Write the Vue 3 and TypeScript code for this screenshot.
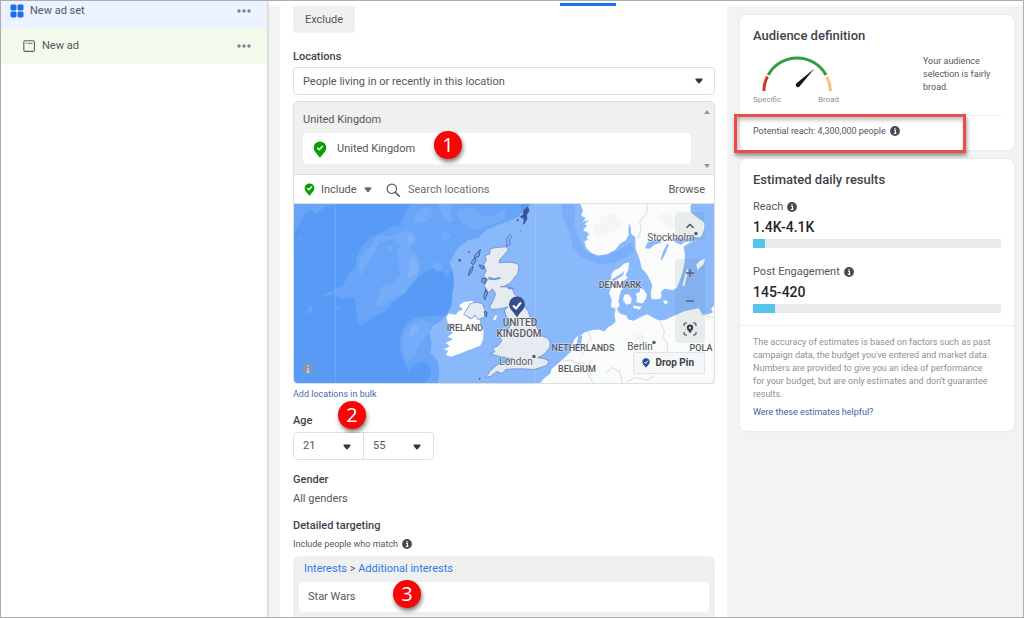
<script setup lang="ts">
import { ref } from 'vue'

interface AdRow { label: string; kind: 'set' | 'ad' }
interface Estimate { label: string; value: string; share: number }
interface Place { name: string; x: number; y: number; kind?: 'city' | 'major' }

const rows: AdRow[] = [
  { label: 'New ad set', kind: 'set' },
  { label: 'New ad', kind: 'ad' },
]

const estimates: Estimate[] = [
  { label: 'Reach', value: '1.4K-4.1K', share: 5 },
  { label: 'Post Engagement', value: '145-420', share: 9 },
]

const places: Place[] = [
  { name: 'IRELAND', x: 171, y: 127 },
  { name: 'UNITED', x: 226, y: 122, kind: 'major' },
  { name: 'KINGDOM', x: 225, y: 133, kind: 'major' },
  { name: 'DENMARK', x: 326, y: 84 },
  { name: 'NETHERLANDS', x: 289, y: 147 },
  { name: 'BELGIUM', x: 283, y: 168 },
  { name: 'POLA', x: 407, y: 147 },
  { name: 'London', x: 222, y: 161, kind: 'city' },
  { name: 'Berlin', x: 346, y: 146, kind: 'city' },
  { name: 'Stockholm', x: 377, y: 37, kind: 'city' },
]

const locationType = ref('People living in or recently in this location')
const mode = ref('Include')
const query = ref('')
const ageMin = ref('21')
const ageMax = ref('55')
</script>

<template>
  <div class="shell">
    <nav class="sidebar" aria-label="Campaign structure">
      <div v-for="row in rows" :key="row.label" class="row" :class="row.kind">
        <svg v-if="row.kind === 'set'" class="row-icon" viewBox="0 0 14 14" aria-hidden="true">
          <g fill="#1b6fee">
            <rect x="0.5" y="0.5" width="6" height="6" rx="1.4" />
            <rect x="7.5" y="0.5" width="6" height="6" rx="1.4" />
            <rect x="0.5" y="7.5" width="6" height="6" rx="1.4" />
            <rect x="7.5" y="7.5" width="6" height="6" rx="1.4" />
          </g>
        </svg>
        <svg v-else class="row-icon" viewBox="0 0 14 14" aria-hidden="true">
          <rect x="1.8" y="1.8" width="10.6" height="10.6" rx="1.4" fill="none" stroke="#5c605c" stroke-width="1.1" />
          <path d="M3.6 4.3h1.2M5.8 4.3h4.8" stroke="#5c605c" stroke-width="0.9" />
        </svg>
        <span class="row-label">{{ row.label }}</span>
        <button class="more" type="button" :aria-label="`More options for ${row.label}`">
          <svg viewBox="0 0 14 4" aria-hidden="true">
            <g fill="#7c8494"><circle cx="2" cy="2" r="1.7" /><circle cx="7" cy="2" r="1.7" /><circle cx="12" cy="2" r="1.7" /></g>
          </svg>
        </button>
      </div>
    </nav>

    <div class="work">
      <div class="tabstrip"><span class="tab-mark"></span></div>
      <div class="columns">
        <main class="form">
          <button class="exclude" type="button">Exclude</button>

          <label class="heading locations-label" for="location-type">Locations</label>
          <div class="picker">
            <select id="location-type" v-model="locationType">
              <option>People living in or recently in this location</option>
            </select>
            <svg class="caret" viewBox="0 0 8 6" aria-hidden="true"><path d="M.6.6h6.8q.4 1.2-.4 2L4.6 5.3q-.6.5-1.2 0L1 2.6Q.2 1.8.6.6z" fill="#33383f" /></svg>
          </div>

          <section class="places">
            <div class="chosen">
              <div class="chosen-list">
                <div class="country">United Kingdom</div>
                <div class="chosen-item">
                  <svg class="pin" viewBox="0 0 14 17" aria-hidden="true">
                    <path d="M7 .5a6.3 6.3 0 0 1 6.4 6.3c0 3.8-4.4 6.7-5.6 9.2q-.8.9-1.6 0C5 13.5.6 10.6.6 6.8A6.3 6.3 0 0 1 7 .5z" fill="#0a9d0a" />
                    <path d="M4.3 6.9l1.9 1.8 3.5-3.6" fill="none" stroke="#fff" stroke-width="1.5" />
                  </svg>
                  <span>United Kingdom</span>
                  <span class="badge badge-one">1</span>
                </div>
              </div>
              <div class="scroller" aria-hidden="true">
                <svg viewBox="0 0 6 4"><path d="M0 4L3 0l3 4z" fill="#969696" /></svg>
                <svg viewBox="0 0 6 4"><path d="M0 0h6L3 4z" fill="#969696" /></svg>
              </div>
            </div>

            <div class="search">
              <svg class="pin small" viewBox="0 0 14 17" aria-hidden="true">
                <path d="M7 .5a6.3 6.3 0 0 1 6.4 6.3c0 3.8-4.4 6.7-5.6 9.2q-.8.9-1.6 0C5 13.5.6 10.6.6 6.8A6.3 6.3 0 0 1 7 .5z" fill="#0a9d0a" />
                <path d="M4 6.7l2.2 2.2 4-4.2" fill="none" stroke="#fff" stroke-width="1.8" />
              </svg>
              <div class="mode">
                <select v-model="mode" aria-label="Include or exclude">
                  <option>Include</option>
                  <option>Exclude</option>
                </select>
                <svg class="mode-caret" viewBox="0 0 8 6" aria-hidden="true"><path d="M.8.9h6.4L4 5z" fill="#5a606b" stroke="#5a606b" stroke-linejoin="round" /></svg>
              </div>
              <svg class="lens" viewBox="0 0 14 14" aria-hidden="true">
                <circle cx="5.8" cy="5.8" r="4.7" fill="none" stroke="#53585f" stroke-width="1.2" />
                <path d="M9.3 9.3l3.8 3.8" stroke="#53585f" stroke-width="1.6" stroke-linecap="round" />
              </svg>
              <input v-model="query" type="text" placeholder="Search locations" aria-label="Search locations" />
              <button class="browse" type="button">Browse</button>
            </div>

            <div class="map">
              <svg class="chart" viewBox="0 0 420 180" preserveAspectRatio="xMidYMid slice" role="img" aria-label="Map of the United Kingdom and northern Europe">
                <rect width="420" height="180" fill="#589bf7" />
                <g transform="scale(0.333333)">
                  <g transform="translate(-9 -12)">
                    <g fill="#68a5f9">
                      <path d="M0 0H138L128 18 100 22 78 42 60 32 44 38 32 60 20 84 8 100z" />
                      <path d="M360 12H690V100L500 172 482 212 468 236 452 256 470 232 456 218 430 206 402 218 376 236 356 262 330 292 306 308 286 336 250 350 226 368 204 378 196 340 192 296 150 296 126 286 88 292 130 270 156 258 176 218 192 202 198 168 214 140 240 112 276 98 300 82 328 78 336 50z" />
                      <path d="M500 170L488 230 484 300 470 344 428 350 380 352 352 366 332 394 326 436 336 484 352 516 370 496 396 486 416 500 420 526 400 552H470L560 400z" />
                      <path d="M48 344L56 320 66 316 60 338z" /><circle cx="26" cy="120" r="4" /><circle cx="140" cy="326" r="4" /><circle cx="186" cy="168" r="4" />
                    </g>
                    <g fill="#74acfa">
                      <path d="M208 178L222 154 244 138 254 112 300 108 348 92 370 100 376 122 356 142 368 158 384 174 388 204 378 236 356 258 342 282 310 294 280 318 252 320 264 288 270 262 306 252 328 224 322 186 318 158 330 136 302 118 264 130 246 168 228 194 208 230 200 216z" />
                      <path d="M384 34L402 22 426 34 420 52 402 66 374 72 366 58zM440 12H486L474 38 488 60 478 72 462 62 450 40zM500 30L546 24 570 50 602 50 642 30V60L550 92 518 72 500 52z" />
                      <path d="M452 102q8-12 20-2t4 18q-10 6-24-2zM430 196q8-12 18-4t4 20q-12 8-22-4z" />
                      <path d="M344 384L364 368 394 362 422 374 412 404 386 436 370 468 348 490 334 450 336 410z" />
                      <circle cx="296" cy="146" r="8" /><circle cx="240" cy="330" r="5" /><path d="M390 12L402 12 396 20z" />
                    </g>
                    <path d="M358 178l8-10 8 16 10 14-4 22-14 10-18 10 6-24zM358 388l18-12 6 14-18 22-8-4zM346 110l16-4 8 16-14 14z" fill="#80b3fa" />
                    <path d="M680 52L650 66 616 78 584 92 562 116 530 122 500 146 486 172 476 190 486 218 490 254 484 284 482 320 466 348 446 366 426 378 414 400 422 430 418 460 440 486 446 518 440 552H1290V12H720z" fill="#89b8fb" />
                  </g>

                  <g transform="translate(621 -12)">
                    <path d="M182 12L186 58 206 98 214 142 242 174 294 194 344 188 382 170 400 154 390 130 340 160 290 172 252 154 236 118 220 80 222 12z" fill="#7aaefa" />
                    <g fill="#fafbfb">
                      <path d="M238 12L246 34 240 48 254 56 242 70 258 78 246 92 262 100 252 112 262 120 250 126 256 146 270 160 290 168 318 164 344 150 358 132 374 122 384 104 386 86 392 106 402 112 404 150 416 180 422 206 436 222 448 244 454 258 450 276 450 296 460 300 478 298 482 290 480 276 492 268 516 272 528 264 536 244 544 220 550 194 552 168 548 142 566 130 584 122 602 108 610 88 610 70 586 52 570 40 568 22 572 12z" />
                      <path d="M332 222L340 212 354 206 370 192 384 188 382 212 374 226 380 236 368 244 366 264 358 280 352 306 356 318 348 328 356 342 376 348 382 360 398 364 420 352 438 344 456 354 472 362 490 362 516 350 548 336 574 330 594 326 604 346 622 344 636 338 630 328 642 316H660V560H110L128 538 148 522 152 508 178 486 204 462 222 444 230 418 248 400 270 392 294 390 310 396 320 384 334 376 344 366 340 346 344 330 330 322 332 300 324 280 330 268 322 250 330 238z" />
                      <path d="M370 286l12-2 10 12-2 16-14 4-10-14zM404 282l12-4 2-12 12 6 8 14-4 14-10 12-18-4 2-14zM396 318l26 4-6 8-18-4zM486 304l10-2 6 8-10 4zM590 214l-4-18 10-12 16-6-4 16-14 12zM544 258l14-50 4 4-12 48z" />
                      <path d="M220 420l12-12 8 4-10 18-14 24-8-4z" />
                    </g>
                    <g fill="#89b8fb">
                      <path d="M432 146l8-18 20-6 16-4 4 12-20 6-14 12zM480 176l8-24 12-20 4 4-12 28-10 20zM514 116l18-2 22 6 22-8 22 2-22 12-26 2-10 8-18-8z" />
                      <path d="M384 70l6 18-2 22-6-12zM238 68l26-6-16 14zM246 110l22-10-14 18zM332 240l30-18 8-8-4 14-30 18zM390 354l14-10 8 6-18 12zM232 408l12 2-4 24-12 20-12-2 12-22z" />
                    </g>
                    <g fill="none" stroke="#c8cad0" stroke-width="2">
                      <path d="M438 12q4 18-4 32l-18 26 4 20-6 22-10 6M338 324l18 2M262 392l8 28-14 14-2 20-14 16M188 484l20-2 22 10 18-2 10 18 4 20 16 24M476 364l14 30-4 20 12 16 2 24M316 520l16-16 24 12 8 34M378 548l24-14 40 8 18-14M604 346l36 10M270 484l-12 18 14 26" />
                    </g>
                    <path d="M276 90l26-36 38-12 20 34-28 24-44 20zM470 50l34-18 26 38-24 22zM390 390l34 12 8 32-20 6zM530 382l38-12 30 20-44 10z" fill="#f3f6f3" />
                  </g>

                  <g transform="translate(411 -12)">
                    <path d="M46 352L54 342 74 346 82 336 96 330 84 318 96 308 124 304 132 318 108 326 100 344 118 360 134 348 146 356 148 380 158 394 156 420 148 438 128 446 108 454 88 462 60 472 44 466 52 454 38 450 56 440 44 430 66 420 50 412 66 400 56 390 68 378 50 370z" fill="#fcfdfc" />
                    <g fill="#e6eaf1" stroke="#5f82c4" stroke-width="2" stroke-linejoin="round">
                      <path d="M98 344L108 330 116 314 134 308 154 312 160 328 166 342 158 354 140 360 132 346 122 358z" />
                      <path d="M178 148L196 144 226 142 232 150 220 166 206 180 204 190 234 188 258 192 264 200 260 222 246 240 238 250 220 260 208 262 232 262 244 268 250 284 268 298 280 320 292 336 300 360 314 376 322 392 330 408 350 416 358 428 356 444 342 462 330 470 320 474 340 478 354 484 348 498 328 504 308 510 278 508 250 508 224 510 214 522 196 516 180 530 164 534 178 514 196 498 210 490 228 488 248 478 230 476 212 472 196 468 178 464 192 456 184 448 202 438 212 424 206 410 194 398 204 390 222 394 236 384 234 366 226 350 220 334 230 322 206 328 182 330 176 322 188 300 194 282 184 268 172 280 160 258 170 240 158 230 166 214 158 196 166 184 162 168 176 164z" />
                    </g>
                    <g fill="#8ea3cf" stroke="#2f4c91" stroke-width="2.5">
                      <path d="M112 228l6-22 8-6-4 18zM120 190l10-14 6 6-10 14zM132 168l16-18-4 20-14 6zM146 196l14 6-4 8-10-8zM154 236l12 2-6 14-8-6zM164 270l6 10-8 20-4-8z" />
                      <path d="M278 34l12-12 4 12-8 12 2 12-10 16 2-16-12-6 10-6z" fill="#3b5594" />
                      <path d="M226 118l10-12 8 6-10 8 4 14-12 6 2-12z" fill="none" stroke-width="1.5" />
                      <path d="M160 336l8 2-2 14-4-4z" />
                    </g>
                    <g fill="#2f4c91"><circle cx="86" cy="182" r="3.5" /><circle cx="260" cy="62" r="3" /><circle cx="146" cy="538" r="2.5" /><circle cx="268" cy="94" r="1.5" /><circle cx="114" cy="158" r="2.5" /></g>
                    <path d="M186 360l8-14 4 2-4 14z" fill="#f4f6f6" />
                    <path d="M172 232l18 4 16-4 4 6-20 4-18-2zM226 264l12-4 14 8-16 2z" fill="#6f9bdd" />
                  </g>
                </g>
                <path d="M41.5 0v180M241.5 0v180" stroke="#fff" stroke-opacity="0.12" />

                <g class="place-names">
                  <text v-for="p in places" :key="p.name" :x="p.x" :y="p.y" :class="p.kind">{{ p.name }}</text>
                </g>
                <g fill="#55585c"><circle cx="240" cy="153" r="1.7" /><circle cx="360" cy="139" r="1.7" /><circle cx="402" cy="30" r="1.7" /></g>
                <path d="M223 93a8 8 0 0 1 8 8c0 5-5 7-8 13-3-6-8-8-8-13a8 8 0 0 1 8-8z" fill="#354f8f" />
                <path d="M219 102l3 3 5-6" fill="none" stroke="#fff" stroke-width="2" />
                <circle cx="14" cy="165" r="6" fill="#8297b8" />
                <path d="M14 161.5v1.5M14 164.5v4M12.5 168.5h3" stroke="#c9d3e2" stroke-width="1.5" />
              </svg>

              <div class="controls">
                <button class="control lone" type="button" aria-label="Collapse map">
                  <svg viewBox="0 0 12 12" aria-hidden="true"><path d="M2.5 7.8L6 4.3l3.5 3.5" fill="none" stroke="#3c4148" stroke-width="1.3" /></svg>
                </button>
                <button class="control first" type="button" aria-label="Zoom in">
                  <svg viewBox="0 0 12 12" aria-hidden="true"><path d="M6 2v8M2 6h8" stroke="#5a626e" stroke-width="1.3" /></svg>
                </button>
                <button class="control" type="button" aria-label="Zoom out">
                  <svg viewBox="0 0 12 12" aria-hidden="true"><path d="M2 6h8" stroke="#5a626e" stroke-width="1.3" /></svg>
                </button>
                <button class="control last" type="button" aria-label="Locate">
                  <svg class="locate" viewBox="0 0 14 14" aria-hidden="true">
                    <path d="M1 4V2.5Q1 1 2.5 1H4M10 1h1.5Q13 1 13 2.5V4M13 10v1.5q0 1.5-1.5 1.5H10M4 13H2.5Q1 13 1 11.5V10" fill="none" stroke="#3c4148" stroke-width="1.1" />
                    <path d="M7 2.6a3.2 3.2 0 0 1 3.2 3.2C10.2 8 8 9.2 7 11.6 6 9.2 3.8 8 3.8 5.8A3.2 3.2 0 0 1 7 2.6z" fill="#3c4148" /><circle cx="7" cy="5.8" r="1.1" fill="#eee" />
                  </svg>
                </button>
              </div>
              <button class="drop" type="button">
                <svg viewBox="0 0 8 10" aria-hidden="true">
                  <path d="M4 .3a3.7 3.7 0 0 1 3.7 3.7C7.7 6.3 5.3 7.5 4 9.8 2.7 7.5.3 6.3.3 4A3.7 3.7 0 0 1 4 .3z" fill="#2f4f9e" />
                  <path d="M2.3 4.1l1.3 1.3 2.3-2.6" fill="none" stroke="#fff" />
                </svg>
                Drop Pin
              </button>
            </div>
          </section>

          <a class="bulk" href="#">Add locations in bulk</a>

          <div class="heading age-label">Age<span class="badge badge-two">2</span></div>
          <div class="ages">
            <div class="picker">
              <select v-model="ageMin" aria-label="Minimum age"><option>18</option><option>21</option></select>
              <svg class="caret" viewBox="0 0 8 6" aria-hidden="true"><path d="M.6.6h6.8q.4 1.2-.4 2L4.6 5.3q-.6.5-1.2 0L1 2.6Q.2 1.8.6.6z" fill="#33383f" /></svg>
            </div>
            <div class="picker">
              <select v-model="ageMax" aria-label="Maximum age"><option>55</option><option>65</option></select>
              <svg class="caret" viewBox="0 0 8 6" aria-hidden="true"><path d="M.6.6h6.8q.4 1.2-.4 2L4.6 5.3q-.6.5-1.2 0L1 2.6Q.2 1.8.6.6z" fill="#33383f" /></svg>
            </div>
          </div>

          <div class="heading gender-label">Gender</div>
          <div class="gender">All genders</div>

          <div class="heading targeting-label">Detailed targeting</div>
          <div class="match">
            Include people who match
            <svg class="info" viewBox="0 0 10 10" aria-hidden="true"><circle cx="5" cy="5" r="4.9" fill="#454a52" /><path d="M4 4.2h1.5v3M3.8 7.4h2.6M5 2v1.2" fill="none" stroke="#fff" stroke-width="1.1" /></svg>
          </div>

          <section class="interests">
            <div class="crumbs"><a href="#">Interests</a> &gt; <a href="#">Additional interests</a></div>
            <div class="interest">Star Wars<span class="badge badge-three">3</span></div>
          </section>
        </main>

        <aside class="summary">
          <section class="card audience">
            <h2>Audience definition</h2>
            <div class="definition">
              <div class="gauge">
                <svg viewBox="0 0 70 37" aria-hidden="true">
                  <g fill="none" stroke-width="3">
                    <path d="M1.8 36Q2.2 27.5 5.5 21.5" stroke="#d6322f" />
                    <path d="M6.2 20A33 33 0 0 1 64 20" stroke="#2f9e44" />
                    <path d="M64.8 21.5Q68 28 68.5 36" stroke="#ffc078" />
                  </g>
                  <path d="M34.2 28.5L52.5 13.5 37.5 31.5Q35.8 32.8 34.4 31.6 33.2 30.2 34.2 28.5z" fill="#101828" />
                </svg>
                <div class="scale"><span>Specific</span><span>Broad</span></div>
              </div>
              <p>Your audience selection is fairly broad.</p>
            </div>
            <div class="potential">
              Potential reach: 4,300,000 people
              <svg class="info" viewBox="0 0 10 10" aria-hidden="true"><circle cx="5" cy="5" r="4.9" fill="#454a52" /><path d="M4 4.2h1.5v3M3.8 7.4h2.6M5 2v1.2" fill="none" stroke="#fff" stroke-width="1.1" /></svg>
            </div>
            <span class="marker"></span>
          </section>

          <section class="card results">
            <h2>Estimated daily results</h2>
            <div v-for="e in estimates" :key="e.label" class="estimate">
              <div class="estimate-label">
                {{ e.label }}
                <svg class="info" viewBox="0 0 10 10" aria-hidden="true"><circle cx="5" cy="5" r="4.9" fill="#454a52" /><path d="M4 4.2h1.5v3M3.8 7.4h2.6M5 2v1.2" fill="none" stroke="#fff" stroke-width="1.1" /></svg>
              </div>
              <div class="estimate-value">{{ e.value }}</div>
              <div class="bar"><div class="bar-fill" :style="{ width: e.share + '%' }"></div></div>
            </div>
            <div class="note">
              <p>The accuracy of estimates is based on factors such as past campaign data, the budget you've entered and market data. Numbers are provided to give you an idea of performance for your budget, but are only estimates and don't guarantee results.</p>
              <a href="#">Were these estimates helpful?</a>
            </div>
          </section>
        </aside>
      </div>
    </div>
  </div>
</template>

<style>
body { margin: 0; }
</style>

<style scoped>
.shell, .shell * { box-sizing: border-box; }
.shell {
  display: grid;
  grid-template-columns: 266px minmax(0, 1fr);
  height: 100vh;
  overflow: hidden;
  border: 1px solid #adadad;
  background: #fff;
  color: #54575c;
  font: 11px/16px Roboto, "Liberation Sans", sans-serif;
}
svg { display: block; flex: none; }
button, input, select { font: inherit; color: inherit; border: 0; padding: 0; margin: 0; background: none; }
a { color: #2a7bea; text-decoration: none; }
h2, p { margin: 0; }

.sidebar { position: relative; z-index: 1; background: #fff; box-shadow: 1px 0 2px #c4c8cc; }
.row { display: flex; align-items: center; gap: 6px; height: 36px; padding-right: 16px; }
.row.set { height: 27px; padding-left: 9px; padding-bottom: 8px; background: #eaf3ff; }
.row.ad { padding-left: 21px; background: #f3f9eb; }
.row-icon { width: 14px; height: 14px; }
.row-label { flex: 1; }
.more svg { width: 14px; height: 4px; }

.work { display: flex; flex-direction: column; min-width: 0; }
.tabstrip { flex: none; display: flex; align-items: flex-end; height: 5px; padding-left: 293px; }
.tab-mark { width: 56px; height: 3px; background: #1b74f4; }
.columns { flex: 1; display: grid; grid-template-columns: minmax(0, 1fr) 296px; padding-left: 13px; background: #f2f4f4; }

.form { padding: 0 12px 0 13px; background: #fff; }
.exclude { display: block; width: 62px; height: 27px; border-radius: 2px 2px 4px 4px; background: #f0f0f0; }
.heading { display: block; font-weight: 500; color: #3f4348; }
.locations-label { margin: 16px 0 2px; }
.picker { position: relative; }
.picker select { display: block; appearance: none; width: 100%; height: 28px; padding: 1px 24px 0 9px; border: 1px solid #dedfe1; border-radius: 4px; background: #fff; }
.caret { position: absolute; right: 12px; top: 11px; width: 8px; height: 6px; pointer-events: none; }

.places { margin-top: 6px; border: 1px solid #dedfe1; border-radius: 4px; }
.chosen { display: flex; background: #f0f0f0; border-bottom: 1px solid #dedfe1; }
.chosen-list { flex: 1; padding: 10px 9px; }
.chosen-item { position: relative; display: flex; align-items: center; gap: 10px; height: 31px; margin-top: 5px; padding: 1px 0 0 10px; border-radius: 4px; background: #fff; }
.pin { width: 14px; height: 17px; }
.pin.small { width: 11px; height: 13px; }
.scroller { display: flex; flex-direction: column; justify-content: space-between; width: 14px; padding: 8px 4px 6px; }
.scroller svg { width: 6px; height: 4px; }

.search { display: flex; align-items: center; height: 28px; padding: 1px 9px 0 10px; }
.mode { position: relative; margin-left: 6px; }
.mode select { display: block; appearance: none; width: 65px; height: 20px; }
.mode-caret { position: absolute; right: 14px; top: 7px; width: 8px; height: 6px; pointer-events: none; }
.lens { width: 14px; height: 14px; }
.search input { flex: 1; min-width: 0; margin-left: 8px; outline: 0; }
.search input::placeholder { color: #6a6f77; opacity: 1; }

.map { position: relative; height: 180px; overflow: hidden; border-top: 1px solid #dedfe1; border-radius: 0 0 4px 4px; }
.chart { width: 100%; height: 100%; }
.place-names text { font: 500 9px Roboto, "Liberation Sans", sans-serif; fill: #55585c; text-anchor: middle; stroke: #fff; stroke-opacity: 0.6; stroke-width: 1px; paint-order: stroke; }
.place-names .major { font-size: 10px; }
.place-names .city { font-size: 10px; font-weight: 400; }
.controls { position: absolute; right: 9px; top: 8px; }
.control { display: flex; align-items: center; justify-content: center; width: 30px; height: 28px; background: rgba(90, 105, 120, 0.1); }
.control svg { width: 12px; height: 12px; }
.control svg.locate { width: 14px; height: 14px; }
.control.lone { margin-bottom: 19px; border-radius: 4px; }
.control.first { border-radius: 4px 4px 0 0; }
.control.last { border-radius: 0 0 4px 4px; }
.drop { position: absolute; right: 9px; bottom: 9px; display: flex; align-items: center; gap: 6px; height: 22px; padding: 0 10px 0 8px; border: 1px solid #e2e4e7; border-radius: 2px; background: #f6f7f8; color: #3f4348; font-size: 10px; font-weight: 700; }
.drop svg { width: 8px; height: 10px; }

.bulk { display: block; margin-top: 2px; color: #4a69ad; font-size: 9px; }
.age-label { position: relative; margin: 11px 0 3px; }
.ages { display: flex; width: 141px; border: 1px solid #dedfe1; border-radius: 4px; }
.ages .picker { flex: 1; }
.ages .picker + .picker { border-left: 1px solid #dedfe1; }
.ages select { height: 26px; padding-top: 0; border: 0; }
.gender-label { margin: 12px 0 3px; }
.targeting-label { margin: 11px 0 2px; }
.match, .potential, .estimate-label { display: flex; align-items: center; gap: 4px; }
.match { font-size: 9px; }
.info { width: 10px; height: 10px; }
.interests { margin-top: 4px; padding: 5px 6px; border-radius: 6px 6px 0 0; background: #f0f0f0; }
.crumbs { padding-left: 5px; }
.interest { position: relative; height: 30px; margin-top: 5px; padding: 7px 9px; border-radius: 4px; background: #fff; }

.badge { position: absolute; width: 28px; height: 28px; border-radius: 50%; background: #f80505; box-shadow: 1px 3px 4px rgba(0, 0, 0, 0.5); color: #fff; font: 20px/28px "Open Sans", sans-serif; text-align: center; }
.badge-one { left: 131px; top: -2px; }
.badge-two { left: 45px; top: -12px; }
.badge-three { left: 94px; top: -2px; }

.summary { padding: 9px 9px 0 13px; }
.card { position: relative; border-radius: 6px; background: #fff; box-shadow: 0 0 2px rgba(0, 0, 0, 0.12); }
.card h2 { font-size: 13px; line-height: 16px; font-weight: 500; color: #3f4348; }
.audience { padding: 13px 13px 11px; }
.definition { display: flex; justify-content: space-between; padding: 11px 0 10px; border-bottom: 1px solid #eceded; }
.gauge { width: 86px; }
.gauge > svg { width: 70px; height: 37px; margin-left: 9px; }
.scale { display: flex; justify-content: space-between; height: 13px; font-size: 8px; color: #8d9095; }
.definition p { width: 78px; font-size: 9px; line-height: 13px; }
.potential { padding-top: 7px; font-size: 9px; }
.marker { position: absolute; left: -6px; right: 48px; top: 99px; height: 39px; border: 3px solid #ee4b4b; box-shadow: 1px 3px 4px rgba(0, 0, 0, 0.4), inset 1px 3px 4px rgba(0, 0, 0, 0.25); }
.results { margin-top: 9px; padding: 13px 13px 11px; }
.estimate { margin-top: 11px; }
.estimate + .estimate { margin-top: 16px; }
.estimate-value { margin: 4px 0; font-size: 14px; font-weight: 500; color: #24272b; }
.bar { height: 9px; background: #e9eaed; }
.bar-fill { height: 100%; background: #55c5ea; }
.note { margin: 12px -13px 0; padding: 10px 20px 0 13px; border-top: 1px solid #eceded; font-size: 9px; color: #8d9095; }
.note p { line-height: 13px; }
.note a { display: block; margin-top: 3px; color: #3c5fad; }
</style>
